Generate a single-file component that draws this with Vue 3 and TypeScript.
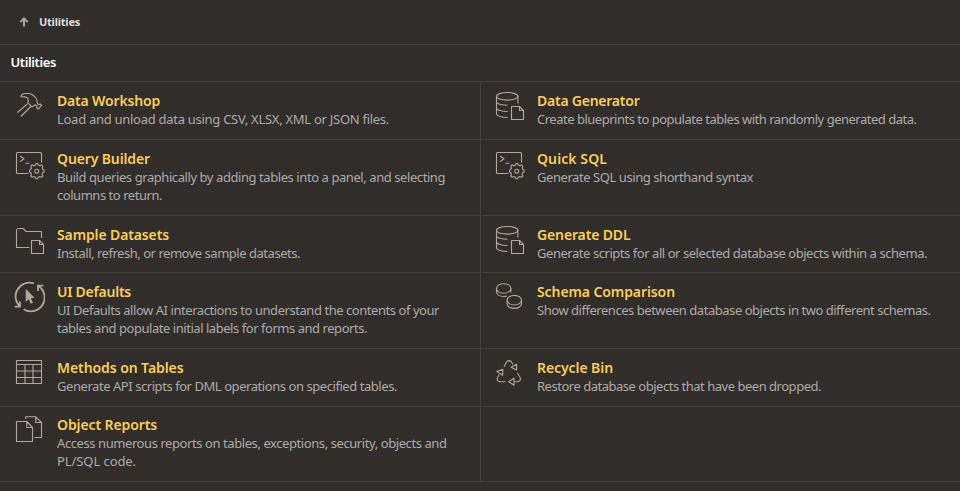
<script setup lang="ts">
interface Utility {
  title: string
  lines: string[]
  icon: string
  titleWidth: number
  widths: number[]
}

const items: Utility[] = [
  { title: 'Data Workshop', lines: ['Load and unload data using CSV, XLSX, XML or JSON files.'], icon: 'hammer', titleWidth: 103, widths: [332] },
  { title: 'Data Generator', lines: ['Create blueprints to populate tables with randomly generated data.'], icon: 'database', titleWidth: 102.5, widths: [379.5] },
  { title: 'Query Builder', lines: ['Build queries graphically by adding tables into a panel, and selecting', 'columns to return.'], icon: 'terminal', titleWidth: 93, widths: [388, 105] },
  { title: 'Quick SQL', lines: ['Generate SQL using shorthand syntax'], icon: 'terminal', titleWidth: 70, widths: [216] },
  { title: 'Sample Datasets', lines: ['Install, refresh, or remove sample datasets.'], icon: 'folder', titleWidth: 112, widths: [243] },
  { title: 'Generate DDL', lines: ['Generate scripts for all or selected database objects within a schema.'], icon: 'database', titleWidth: 93.5, widths: [390] },
  { title: 'UI Defaults', lines: ['UI Defaults allow AI interactions to understand the contents of your', 'tables and populate initial labels for forms and reports.'], icon: 'cursor', titleWidth: 74, widths: [382, 310] },
  { title: 'Schema Comparison', lines: ['Show differences between database objects in two different schemas.'], icon: 'coins', titleWidth: 138, widths: [393.5] },
  { title: 'Methods on Tables', lines: ['Generate API scripts for DML operations on specified tables.'], icon: 'table', titleWidth: 126.5, widths: [340] },
  { title: 'Recycle Bin', lines: ['Restore database objects that have been dropped.'], icon: 'recycle', titleWidth: 76, widths: [284] },
  { title: 'Object Reports', lines: ['Access numerous reports on tables, exceptions, security, objects and', 'PL/SQL code.'], icon: 'files', titleWidth: 100, widths: [389.5, 79] },
]

const ctx = document.createElement('canvas').getContext('2d')!

function tracking(text: string, width: number, font: string) {
  ctx.font = font
  return { letterSpacing: `${((width - ctx.measureText(text).width) / text.length).toFixed(3)}px` }
}
const titleFont = '600 14px "Noto Sans"'
const bodyFont = '400 13px "Noto Sans"'
</script>

<template>
  <main class="page">
    <nav class="crumbs">
      <svg class="up" viewBox="0 0 10 12"><path d="M5 10.5V2.5M1.3 6 5 2.3 8.7 6" /></svg>
      <span :style="tracking('Utilities', 41, '700 11px &quot;Noto Sans&quot;')">Utilities</span>
    </nav>
    <h1 class="heading"><span :style="tracking('Utilities', 45.5, '600 13px &quot;Noto Sans&quot;')">Utilities</span></h1>
    <section class="grid">
      <a v-for="item in items" :key="item.title" class="cell">
        <svg class="icon" viewBox="0 0 32 32">
          <g v-if="item.icon === 'hammer'">
            <path d="M14.2 14 4.4 22.5M17.8 16.5 7.8 26.5M7.8 6.6C8.5 4.4 9.8 3.5 12 3.5h3.5c3.2 0 5 1.8 7 4 1.7 1.8 2 3.1 1.9 6l1.2 1.2 1.6-.7 1.4 1.3-3.5 3.8-1.5-1.3.4-1.3-1.8-1.8-3.2 2.2-4.2-4c1.4-3.4.2-5.4-3-6-1.7-.3-2.5-.3-4-.3Z" />
          </g>
          <g v-else-if="item.icon === 'terminal'">
            <path d="M15.3 25.5H4.5q-1 0-1-1v-19q0-1 1-1h23q1 0 1 1v9M7 8l4 2.8-4 2.8M12.3 15.3h4.2" />
            <path d="m22.4 17 .5-1.5h1.8l.5 1.5 1.6.7 1.8-.9 1.3 1.3-.8 1.8.7 1.6 1.2.5v2.2l-1.2.5-.7 1.6.8 1.7-1.3 1.3-1.8-.8-1.6.7-.5 1.6h-1.8l-.5-1.6-1.6-.7-1.8.8-1.3-1.3.8-1.7-.7-1.6-1.2-.5V22l1.2-.5.7-1.6-.8-1.8 1.3-1.3 1.8.9Z" />
            <circle cx="23.8" cy="23.2" r="2" />
          </g>
          <g v-else-if="item.icon === 'folder'">
            <path d="M16.3 23.5H3.5V6l1.3-1.5h5.4L13 7.5h15.5V14M18.5 16.5h8l4 4v9h-12ZM26.5 16.5v4h4" />
          </g>
          <g v-else-if="item.icon === 'cursor'">
            <path class="thick" d="M20.8 2.4A13.8 13.8 0 0 0 7 25.6M1.7 25.7H7v-5.3M10.6 28.3A13.8 13.8 0 0 0 25 4.7M30.3 4.7H25V10" />
            <path class="solid" d="M12.7 7.7v13.2l3-2.6 2 4.4 2.3-1-2.2-4.4 3.7-.6Z" />
          </g>
          <g v-else-if="item.icon === 'table'">
            <path d="M3.5 3.5h25v23h-25ZM3.5 7.5h25M3.5 14h25M3.5 20.5h25M12 7.5v19M20 7.5v19" />
          </g>
          <g v-else-if="item.icon === 'files'">
            <path d="M3.5 6.5h10.3l5.7 6v14h-16ZM13.8 6.5v6h5.7M12.7 4V1.8h10l5.8 5.7v15h-7.2M22.7 1.8v5.7h5.8" />
          </g>
          <g v-else-if="item.icon === 'database'">
            <ellipse cx="14.2" cy="6.3" rx="10.7" ry="3.8" />
            <path d="M3.5 6.3v17.5c0 2.2 5.2 3.7 11 3.7M24.9 6.3v7.2M3.5 12c0 1.8 5.2 3.2 11 3.2M3.5 18c0 2 5.2 3.5 11 3.5M18.5 16.5h8l4 4v9h-12ZM26.5 16.5v4h4" />
          </g>
          <g v-else-if="item.icon === 'coins'">
            <ellipse cx="10.7" cy="7.5" rx="7.2" ry="4.8" />
            <path d="M3.5 7.5v3.3c0 2.7 3 4.7 7.2 4.7 1.2 0 2.2-.2 3.2-.5M17.9 7.5v3.9" />
            <ellipse cx="21.3" cy="19.2" rx="7.2" ry="4.8" />
            <path d="M14.1 19.2v3.3c0 2.7 3 4.9 7.2 4.9s7.2-2.2 7.2-4.9v-3.3" />
          </g>
          <g v-else>
            <path d="m11 9.8 2.3-4.3c1.3-2.5 4.3-2.5 5.6 0l1.2 2M18 10.3l5.6 2.8V7.3ZM24.3 15.7l2.8 4.8c1 1.8-.2 4.2-2.5 4.2h-3.4M15.7 24.7l5.3-3.5v7ZM12.3 24.7H7c-2.3 0-3.5-2.2-2.4-4.2l1.7-3M3.7 14.4l6-2.2v6Z" />
          </g>
        </svg>
        <div class="text">
          <h2 class="title" :style="tracking(item.title, item.titleWidth, titleFont)">{{ item.title }}</h2>
          <p v-for="(line, i) in item.lines" :key="line" class="line" :style="tracking(line, item.widths[i], bodyFont)">{{ line }}</p>
        </div>
      </a>
      <div class="cell"></div>
    </section>
  </main>
</template>

<style>
body { background: #312d2a; }
</style>

<style scoped>
.page {
  height: 491px;
  overflow: hidden;
  background: #312d2a;
  color: #fff;
  font-family: "Noto Sans", sans-serif;
}
.crumbs {
  box-sizing: border-box;
  height: 45px;
  padding-left: 18.5px;
  display: flex;
  align-items: center;
  gap: 10.5px;
  border-bottom: 1px solid #423e3b;
  color: #dddcdb;
  font-size: 11px;
  font-weight: 700;
  line-height: 16px;
}
.up { width: 10px; height: 12px; fill: none; stroke: #aaa7a4; stroke-width: 2; }
.heading {
  box-sizing: border-box;
  height: 37px;
  margin: 0;
  padding: 8px 10.5px;
  border-bottom: 1px solid #423e3b;
  font-size: 13px;
  font-weight: 600;
  line-height: 19px;
}
.grid {
  display: grid;
  grid-template-columns: 481px 479px;
  grid-template-rows: 58px 76px 57px 76px 58px 75px;
}
.cell {
  box-sizing: border-box;
  display: flex;
  gap: 12px;
  padding: 8px 0 0 12px;
  border-bottom: 1px solid #423e3b;
  min-width: 0;
}
.cell:nth-child(odd) { padding-left: 13px; gap: 12px; border-right: 1px solid #423e3b; }
.icon {
  flex: none;
  width: 32px;
  height: 32px;
  fill: none;
  stroke: #b0a99e;
  stroke-width: 1.1;
  stroke-linejoin: round;
}
.thick { stroke-width: 1.8; stroke-linejoin: miter; }
.solid { fill: #b0a99e; stroke: none; }
.text { padding-top: 2px; white-space: nowrap; }
.cell:nth-child(11) .text { padding-top: 1px; }
.title { margin: 0; color: #fbce5a; font-size: 14px; font-weight: 600; line-height: 18px; }
.line { margin: 0; color: #adabaa; font-size: 13px; line-height: 18px; }
</style>
